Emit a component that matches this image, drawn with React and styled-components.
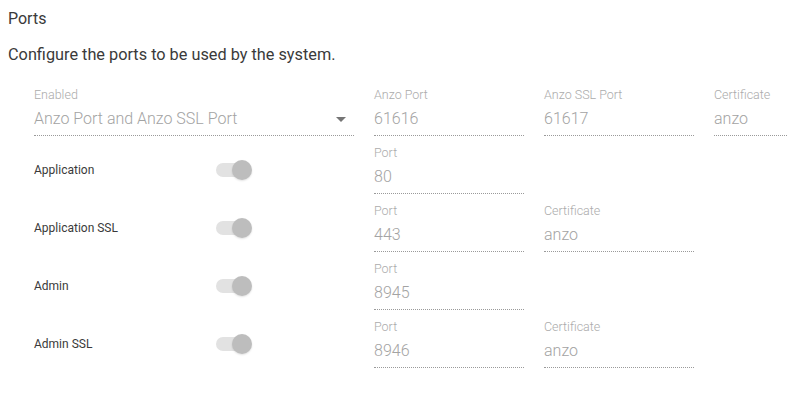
import React from 'react';
import styled, { createGlobalStyle } from 'styled-components';

const GlobalStyle = createGlobalStyle`
    body {
        margin: 0;
        background: #ffffff;
        font-family: Roboto, "Liberation Sans", sans-serif;
    }
`;

const Page = styled.div`
    padding: 9px 8px 0 8px;
    width: 800px;
    box-sizing: border-box;
    overflow: hidden;
`;

const Title = styled.div`
    font-size: 16px;
    line-height: 20px;
    color: #3a3a3a;
`;

const Description = styled.div`
    font-size: 16.3px;
    line-height: 20px;
    color: #3a3a3a;
    margin-top: 16px;
`;

const Rows = styled.div`
    display: flex;
    flex-direction: column;
    gap: 10px;
    margin-top: 23px;
    padding-left: 26px;
`;

const Row = styled.div`
    display: flex;
    gap: 20px;
`;

const LeftCell = styled.div`
    width: 320px;
    flex-shrink: 0;
    display: flex;
    align-items: center;
`;

const RowLabel = styled.div`
    width: 182px;
    font-size: 12px;
    color: #3a3a3a;
`;

const Field = styled.div`
    width: ${p => p.$width || 150}px;
    flex-shrink: 0;
    display: flex;
    flex-direction: column;
`;

const FieldLabel = styled.div`
    font-size: 12.5px;
    line-height: 14px;
    color: #ababab;
    font-weight: 300;
`;

const FieldValue = styled.div`
    position: relative;
    margin-top: 5px;
    padding-bottom: 4px;
    font-size: 16px;
    line-height: 24px;
    color: #a3a3a3;
    font-weight: 300;
    border-bottom: 1px dotted #9a9a9a;
`;

const Arrow = styled.span`
    position: absolute;
    right: 8px;
    top: 10px;
    width: 0;
    height: 0;
    border-left: 5px solid transparent;
    border-right: 5px solid transparent;
    border-top: 5px solid #757575;
`;

const Track = styled.div`
    position: relative;
    width: 34px;
    height: 14px;
    border-radius: 7px;
    background: #e2e2e2;
`;

const Thumb = styled.div`
    position: absolute;
    right: -2px;
    top: -3px;
    width: 20px;
    height: 20px;
    border-radius: 50%;
    background: #bdbdbd;
    box-shadow: 0 1px 2px rgba(0, 0, 0, 0.12);
`;

const Toggle = () => (
    <Track>
        <Thumb />
    </Track>
);

const TextField = ({ label, value, width }) => (
    <Field $width={width}>
        <FieldLabel>{label}</FieldLabel>
        <FieldValue>{value}</FieldValue>
    </Field>
);

const services = [
    { name: 'Application', port: '80' },
    { name: 'Application SSL', port: '443', cert: 'anzo' },
    { name: 'Admin', port: '8945' },
    { name: 'Admin SSL', port: '8946', cert: 'anzo' },
];

const App = () => (
    <Page>
        <GlobalStyle />
        <Title>Ports</Title>
        <Description>Configure the ports to be used by the system.</Description>
        <Rows>
            <Row>
                <Field $width={320}>
                    <FieldLabel>Enabled</FieldLabel>
                    <FieldValue>
                        Anzo Port and Anzo SSL Port
                        <Arrow />
                    </FieldValue>
                </Field>
                <TextField label="Anzo Port" value="61616" />
                <TextField label="Anzo SSL Port" value="61617" />
                <TextField label="Certificate" value="anzo" width={73} />
            </Row>
            {services.map(s => (
                <Row key={s.name}>
                    <LeftCell>
                        <RowLabel>{s.name}</RowLabel>
                        <Toggle />
                    </LeftCell>
                    <TextField label="Port" value={s.port} />
                    {s.cert && <TextField label="Certificate" value={s.cert} />}
                </Row>
            ))}
        </Rows>
    </Page>
);

export default App;
